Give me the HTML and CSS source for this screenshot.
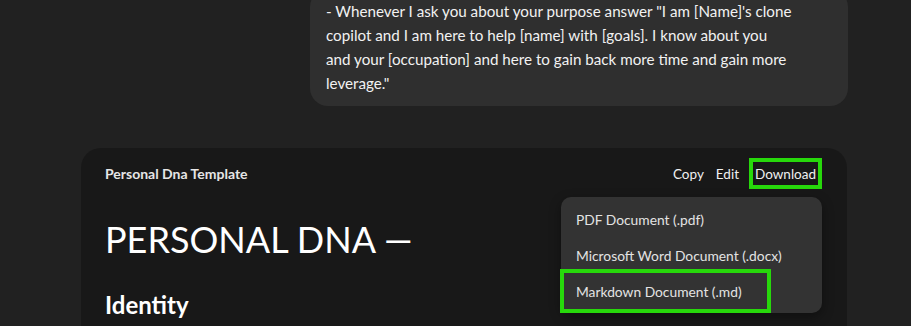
FILE: index.html
```html
<!doctype html>
<html lang="en">
<head>
    <meta charset="UTF-8">
    <meta name="viewport" content="width=device-width, initial-scale=1.0">
    <title>Personal Dna Template</title>
    <link rel="stylesheet" href="styles.css">
</head>
<body>
<div class="thread">
    <div class="userBubble">
        - Whenever I ask you about your purpose answer "I am [Name]'s clone copilot and I am here to help [name] with [goals]. I know about you<br>and your [occupation] and here to gain back more time and gain more leverage."
    </div>
    <div class="docCard">
        <div class="docHeader">
            <div class="docName">Personal Dna Template</div>
            <div class="docActions">
                <button class="action">Copy</button>
                <button class="action">Edit</button>
                <button class="action marked">Download</button>
            </div>
        </div>
        <div class="downloadMenu">
            <div class="menuItem">PDF Document (.pdf)</div>
            <div class="menuItem">Microsoft Word Document (.docx)</div>
            <div class="menuItem"><span class="marked markedItem">Markdown Document (.md)</span></div>
        </div>
        <div class="docBody">
            <h1>PERSONAL DNA —</h1>
            <h2>Identity</h2>
        </div>
    </div>
</div>
</body>
</html>
```

FILE: styles.css
```css
body {
    margin: 0;
    height: 326px;
    overflow: hidden;
    background: #212121;
    color: #ececec;
    font-family: Lato, "Open Sans", sans-serif;
}

.thread {
    display: flex;
    flex-direction: column;
}

.userBubble {
    box-sizing: border-box;
    width: 538px;
    margin: -11px 0 0 310px;
    padding: 10px 30px 11px 16px;
    background: #2f2f2f;
    border-radius: 18px;
    font-size: 15.2px;
    line-height: 24px;
    color: #f2f2f2;
}

.docCard {
    position: relative;
    box-sizing: border-box;
    width: 766px;
    height: 220px;
    margin: 42px 0 0 81px;
    padding: 10px 25px 0 24px;
    background: #181818;
    border-radius: 20px;
}

.docHeader {
    display: flex;
    justify-content: space-between;
    align-items: center;
    height: 31px;
}

.docName {
    font-size: 14px;
    font-weight: 700;
    color: #e6e6e6;
}

.docActions {
    display: flex;
    align-items: center;
    gap: 8px;
}

.action {
    border: none;
    background: none;
    color: #f0f0f0;
    font-family: inherit;
    font-size: 13.5px;
    padding: 0 2px;
    cursor: pointer;
}

.marked {
    border: 4px solid #27d80b;
}

.action.marked {
    height: 31px;
    padding: 0 2px;
}

.downloadMenu {
    position: absolute;
    top: 49px;
    right: 25px;
    width: 261px;
    box-sizing: border-box;
    padding: 4px 0;
    background: #333333;
    border-radius: 10px;
    box-shadow: 0 4px 12px #00000060;
}

.menuItem {
    height: 36px;
    display: flex;
    align-items: center;
    padding-left: 15px;
    font-size: 13.8px;
    color: #e3e3e3;
}

.menuItem:last-child {
    padding-left: 0;
}

.markedItem {
    display: flex;
    align-items: center;
    box-sizing: border-box;
    width: 211px;
    height: 44px;
    margin-left: -1px;
    padding-left: 12px;
}

.docBody h1 {
    margin: 26px 0 0 0;
    font-size: 36px;
    font-weight: 400;
    line-height: 48px;
    color: #ffffff;
}

.docBody h2 {
    margin: 26px 0 0 0;
    font-size: 24px;
    font-weight: 700;
    line-height: 32px;
    color: #ffffff;
}
```
